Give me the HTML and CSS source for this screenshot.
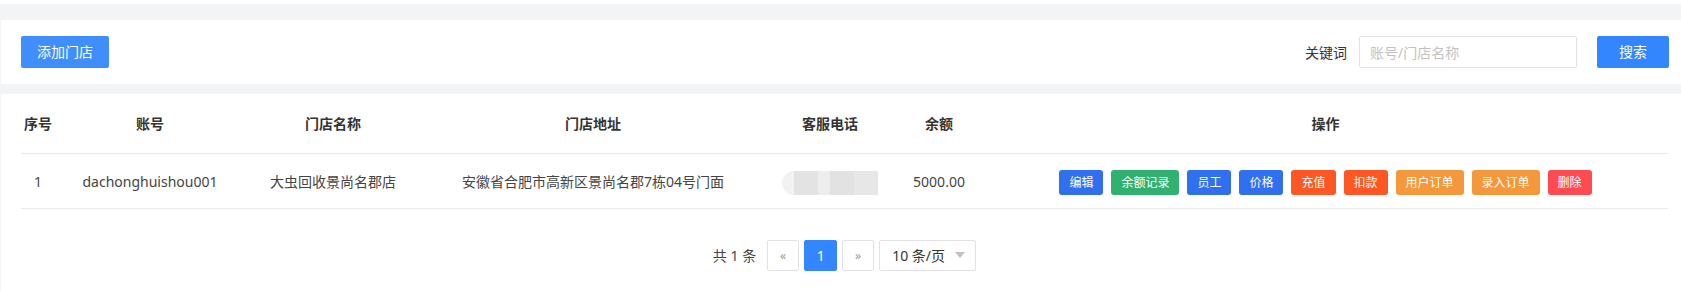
FILE: index.html
```html
<!DOCTYPE html>
<html lang="zh-CN">
<head>
  <meta charset="UTF-8" />
  <meta name="viewport" content="width=device-width, initial-scale=1" />
  <title>门店管理</title>
  <link rel="stylesheet" href="styles.css">
</head>
<body>
  <div class="page">
    <div class="card toolbar">
      <button class="btn btn-primary">添加门店</button>
      <div class="search">
        <label for="kw">关键词</label>
        <input type="text" id="kw" placeholder="账号/门店名称">
        <button class="btn btn-search">搜索</button>
      </div>
    </div>

    <div class="card list">
      <table>
        <colgroup>
          <col class="c-no">
          <col class="c-account">
          <col class="c-name">
          <col class="c-addr">
          <col class="c-phone">
          <col class="c-money">
          <col class="c-ops">
        </colgroup>
        <tr>
          <th>序号</th>
          <th>账号</th>
          <th>门店名称</th>
          <th>门店地址</th>
          <th>客服电话</th>
          <th>余额</th>
          <th>操作</th>
        </tr>
        <tr>
          <td>1</td>
          <td>dachonghuishou001</td>
          <td>大虫回收景尚名郡店</td>
          <td>安徽省合肥市高新区景尚名郡7栋04号门面</td>
          <td><span class="blur"></span></td>
          <td>5000.00</td>
          <td>
            <div class="ops">
              <span class="tag blue">编辑</span>
              <span class="tag green">余额记录</span>
              <span class="tag blue">员工</span>
              <span class="tag blue">价格</span>
              <span class="tag red">充值</span>
              <span class="tag red">扣款</span>
              <span class="tag orange">用户订单</span>
              <span class="tag orange">录入订单</span>
              <span class="tag danger">删除</span>
            </div>
          </td>
        </tr>
      </table>

      <div class="pager">
        <span class="total">共 1 条</span>
        <a class="pg arrow">«</a>
        <a class="pg active">1</a>
        <a class="pg arrow">»</a>
        <div class="limit">
          <span>10 条/页</span>
          <i class="caret"></i>
        </div>
      </div>
    </div>
  </div>
</body>
</html>
```

FILE: styles.css
```css
html, body {
  margin: 0;
  padding: 0;
  background: #fff;
  height: 100%;
  overflow: hidden;
}
body {
  font-family: "Noto Sans", "Noto Sans CJK SC", sans-serif;
  font-size: 14px;
  color: #333;
}
.page {
  margin-top: 4px;
  background: #f3f4f6;
  padding: 16px 0 0 1px;
  height: calc(100% - 4px);
  box-sizing: border-box;
  display: flex;
  flex-direction: column;
}
.card {
  background: #fff;
}
.toolbar {
  display: flex;
  justify-content: space-between;
  align-items: center;
  padding: 16px 12px 16px 20px;
  margin-bottom: 10px;
}
.btn {
  font-family: inherit;
  height: 32px;
  border: none;
  border-radius: 2px;
  color: #fff;
  font-size: 14px;
  padding: 0 16px;
  line-height: 32px;
  cursor: pointer;
}
.btn-primary {
  background: #3f8efc;
}
.btn-search {
  background: #3486ff;
  width: 72px;
  padding: 0;
}
.search {
  display: flex;
  align-items: center;
}
.search label {
  margin-right: 12px;
  color: #333;
}
.search input {
  width: 218px;
  height: 32px;
  box-sizing: border-box;
  border: 1px solid #e2e2e2;
  border-radius: 2px;
  padding: 0 10px;
  font-family: inherit;
  font-size: 14px;
  margin-right: 20px;
  outline: none;
}
.search input::placeholder {
  color: #c2c2c2;
}
.list {
  flex: 1;
  padding: 0 13px 0 20px;
}
table {
  width: 100%;
  table-layout: fixed;
  border-collapse: separate;
  border-spacing: 0;
}
.c-no { width: 34px; }
.c-account { width: 190px; }
.c-name { width: 176px; }
.c-addr { width: 344px; }
.c-phone { width: 130px; }
.c-money { width: 88px; }
th {
  padding: 20px 0 19px;
  line-height: 20px;
  font-weight: bold;
  color: #333;
  text-align: center;
  border-bottom: 1px solid #e6e9ee;
}
td {
  padding: 14px 0 13px;
  line-height: 25px;
  text-align: center;
  color: #444;
  border-bottom: 1px solid #e6e9ee;
  white-space: nowrap;
}
.blur {
  display: inline-block;
  width: 96px;
  height: 24px;
  vertical-align: middle;
  border-radius: 12px 0 0 12px;
  background: linear-gradient(90deg,
    #f2f2f2 0, #f2f2f2 12px,
    #e3e3e3 12px, #e3e3e3 36px,
    #ededed 36px, #ededed 48px,
    #e2e2e2 48px, #e2e2e2 72px,
    #e7e7e7 72px, #e7e7e7 96px);
}
.ops {
  display: inline-flex;
  gap: 8px;
  vertical-align: middle;
}
.tag {
  display: inline-block;
  height: 25px;
  line-height: 25px;
  padding: 0 10px;
  font-size: 12px;
  color: #fff;
  border-radius: 3px;
}
.blue { background: #3070ee; }
.green { background: #31b16f; }
.red { background: #ff5723; }
.orange { background: #f5983b; }
.danger { background: #ff4a51; }
.pager {
  display: flex;
  justify-content: center;
  align-items: center;
  gap: 5px;
  margin-top: 31px;
}
.total {
  margin-right: 6px;
  color: #444;
}
.pg {
  width: 32px;
  height: 31px;
  box-sizing: border-box;
  border: 1px solid #e2e2e2;
  border-radius: 2px;
  display: flex;
  align-items: center;
  justify-content: center;
  color: #333;
}
.pg.arrow {
  color: #999;
  font-size: 12px;
}
.pg.active {
  background: #3486ff;
  border-color: #3486ff;
  color: #fff;
  width: 33px;
}
.limit {
  width: 97px;
  height: 31px;
  box-sizing: border-box;
  border: 1px solid #e2e2e2;
  border-radius: 2px;
  display: flex;
  align-items: center;
  justify-content: space-between;
  padding: 0 10px 0 12px;
  color: #333;
}
.caret {
  width: 0;
  height: 0;
  border-top: 6px solid #c2c2c2;
  border-left: 5px solid transparent;
  border-right: 5px solid transparent;
}
```
